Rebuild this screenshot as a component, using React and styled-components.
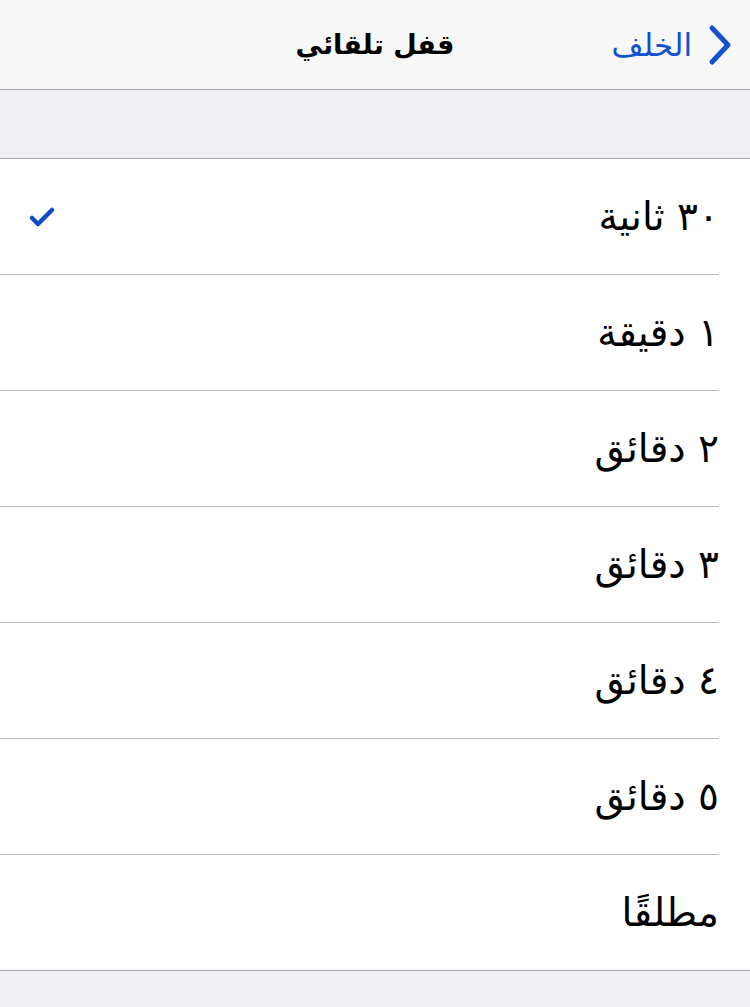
import React from 'react';
import styled, { createGlobalStyle } from 'styled-components';

const GlobalStyle = createGlobalStyle`
  html, body {
    margin: 0;
    padding: 0;
    background: #efeff4;
    font-family: "DejaVu Sans", "Noto Sans", sans-serif;
  }
`;

const options = [
  { label: '٣٠ ثانية', checked: true },
  { label: '١ دقيقة' },
  { label: '٢ دقائق' },
  { label: '٣ دقائق' },
  { label: '٤ دقائق' },
  { label: '٥ دقائق' },
  { label: 'مطلقًا' },
];

const App = () => {
  return (
    <Page dir='rtl'>
      <GlobalStyle />
      <NavBar>
        <BackButton>
          <svg width='28' height='42' viewBox='0 0 28 42'>
            <polyline
              points='6,4 22,21 6,38'
              fill='none'
              stroke='#1250cf'
              strokeWidth='5'
              strokeLinecap='round'
              strokeLinejoin='round'
            />
          </svg>
          <BackLabel>الخلف</BackLabel>
        </BackButton>
        <Title>قفل تلقائي</Title>
      </NavBar>
      <Spacer />
      <List>
        {options.map((opt, i) => (
          <Row key={opt.label}>
            <RowInner last={i === options.length - 1}>
              <Label>{opt.label}</Label>
              {opt.checked && (
                <svg width='28' height='22' viewBox='0 0 28 22'>
                  <polyline
                    points='4,12 10,18 24,4'
                    fill='none'
                    stroke='#0f49c8'
                    strokeWidth='4.5'
                    strokeLinecap='round'
                    strokeLinejoin='round'
                  />
                </svg>
              )}
            </RowInner>
          </Row>
        ))}
      </List>
    </Page>
  );
};

export default App;

const Page = styled.div`
  width: 750px;
  min-height: 1007px;
  background: #efeff4;
`;

const NavBar = styled.div`
  position: relative;
  height: 89px;
  background: #f7f7f7;
  border-bottom: 1px solid #a7a7aa;
  display: flex;
  align-items: center;
`;

const BackButton = styled.div`
  display: flex;
  align-items: center;
  gap: 14px;
  padding-right: 16px;
`;

const BackLabel = styled.span`
  font-size: 31px;
  color: #1250cf;
`;

const Title = styled.div`
  position: absolute;
  left: 0;
  right: 0;
  text-align: center;
  font-size: 27px;
  font-weight: bold;
  color: #000;
  pointer-events: none;
`;

const Spacer = styled.div`
  height: 68px;
`;

const List = styled.div`
  background: #fff;
  border-top: 1px solid #a7a7aa;
  border-bottom: 1px solid #a7a7aa;
`;

const Row = styled.div`
  padding-right: 31px;
`;

const RowInner = styled.div`
  height: 115px;
  display: flex;
  align-items: center;
  justify-content: space-between;
  padding-left: 28px;
  border-bottom: ${(p) => (p.last ? 'none' : '1px solid #bcbbc1')};
`;

const Label = styled.span`
  font-size: 39px;
  color: #000;
`;
